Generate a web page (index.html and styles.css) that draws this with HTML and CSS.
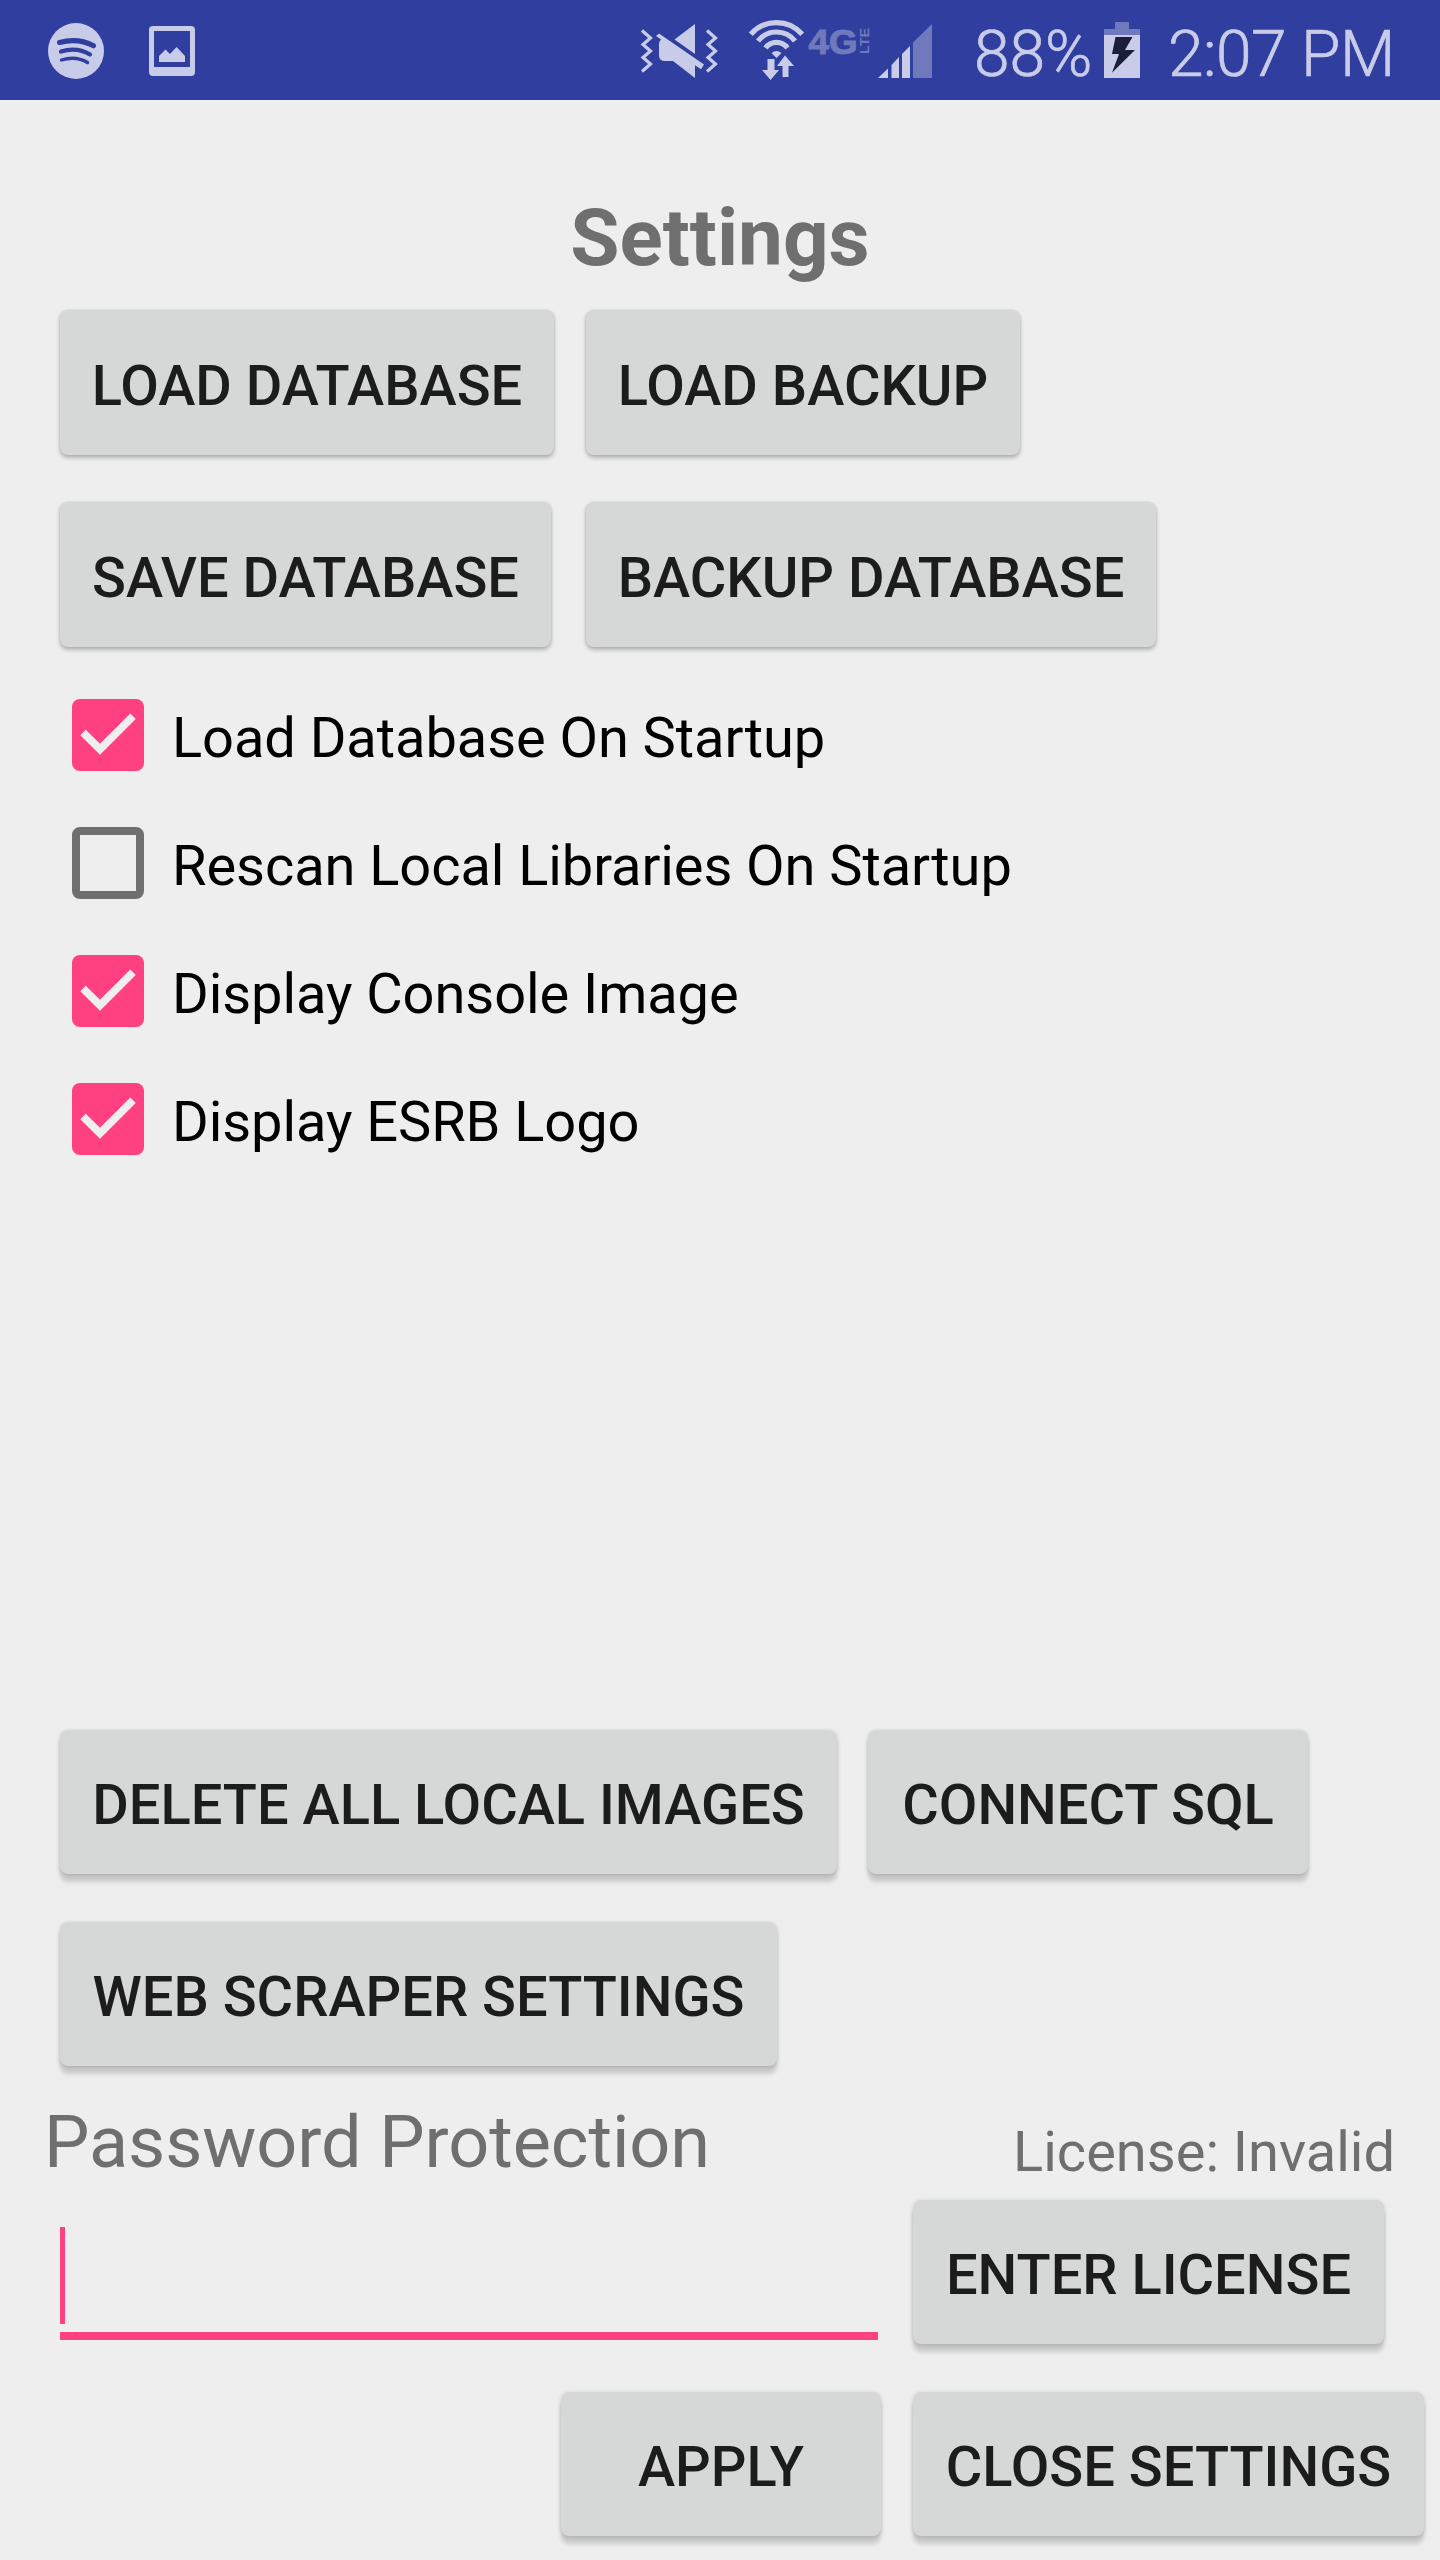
FILE: index.html
```html
<!DOCTYPE html>
<html lang="en">
<head>
<meta charset="utf-8">
<title>Settings</title>
<link rel="stylesheet" href="styles.css">
</head>
<body>
<div class="screen">
  <header class="status">
    <svg class="ico spotify" viewBox="48 23 56 56" width="56" height="56"><circle cx="76" cy="51" r="28" fill="#c9cce8"/><g fill="none" stroke="#303f9f" stroke-linecap="round"><path d="M59.500 42.500Q78 37.500 93.500 45.800" stroke-width="5"/><path d="M61 51.500Q77 46.500 90 54.500" stroke-width="4.200"/><path d="M61.500 60Q76 55.500 87.500 62.500" stroke-width="3.400"/></g></svg>
    <svg class="ico picture" viewBox="149 26 46 50" width="46" height="50"><path fill="#c9cce8" fill-rule="evenodd" d="M153 26h38a4 4 0 0 1 4 4v42a4 4 0 0 1-4 4h-38a4 4 0 0 1-4-4V30a4 4 0 0 1 4-4zM154 31v36h36V31z"/><path fill="#c9cce8" d="M159 62v-6l6.500-6.500 4.500 4.500 6.500-7 8.500 9v6z"/></svg>
    <svg class="ico mute" viewBox="640 22 78 58" width="78" height="58"><g fill="none" stroke="#c9cce8" stroke-width="3.200"><path d="M642 30.500l8.500 7.500-7.500 6.500 7.500 6.500-7.500 6.500 7.500 6.500-8.500 7.500M707 30.500l8.500 7.500-7.500 6.500 7.500 6.500-7.500 6.500 7.500 6.500-8.500 7.500"/></g><path fill="#c9cce8" d="M695 24v30l-20.500-14.500zM659 33.500l45 31-3 4.700-6-4V78l-22-17h-8q-6 0-6-6V44q0-3 2-4.500l-5-3.500z"/></svg>
    <svg class="ico wifi" viewBox="748 20 56 61" width="56" height="61"><g fill="none" stroke="#c9cce8" stroke-width="5.200"><path d="M750.800 34.300a34 34 0 0 1 51.400 0"/><path d="M758 41a23.500 23.500 0 0 1 37 0"/><path d="M765.500 48a13.500 13.500 0 0 1 22 0"/></g><path fill="#c9cce8" d="M771.500 53q5-4 10 0l-5 5zM767.500 59h7v11h4.500l-8.500 10-8.500-10h5.500zM785 55.500l9 10.500h-5.500v11h-6v-11H777z"/></svg>
    <svg class="ico lte" viewBox="808 26 62 30" width="62" height="30"><g fill="#7179bd" stroke="#7179bd"><text class="fourg" x="808.500" y="53.500" textLength="49" lengthAdjust="spacingAndGlyphs">4G</text><text class="small-lte" transform="translate(868.500 54) rotate(-90)" x="0" y="0" textLength="26" lengthAdjust="spacingAndGlyphs">LTE</text></g></svg>
    <svg class="ico signal" viewBox="878 24 54 54" width="54" height="54"><path fill="#7179bd" d="M913 42.500L932 24v54h-19z"/><path fill="#c9cce8" d="M878 78l10-9.500V78zM891.500 65l7.500-8v21h-7.500zM902 54l8-8v32h-8z"/></svg>
    <span class="pct">88%</span>
    <svg class="ico battery" viewBox="1104 22 36 56" width="36" height="56"><path fill="#7179bd" d="M1115 22h14v7h11v6h-36v-6h11z"/><path fill="#c9cce8" d="M1104 35h36v43h-36z"/><path fill="#1b1e38" d="M1115.500 37h17l-7.500 13h10l-23 22.700 7-18.700h-7z"/></svg>
    <span class="time">2:07 PM</span>
  </header>

  <h1 class="title">Settings</h1>

  <div class="grid">
    <button class="btn load-db">LOAD DATABASE</button>
    <button class="btn load-bk">LOAD BACKUP</button>
    <button class="btn save-db">SAVE DATABASE</button>
    <button class="btn bk-db">BACKUP DATABASE</button>
  </div>

  <div class="checks">
    <div class="check"><svg class="box" viewBox="0 0 72 72"><rect width="72" height="72" rx="8" fill="#ff4081"/><path d="M11 33.500L28 50.300 61 17.300" fill="none" stroke="#eee" stroke-width="7.800"/></svg><span>Load Database On Startup</span></div>
    <div class="check"><svg class="box" viewBox="0 0 72 72"><rect x="4" y="4" width="64" height="64" rx="4" fill="none" stroke="#6f6f6f" stroke-width="8"/></svg><span>Rescan Local Libraries On Startup</span></div>
    <div class="check"><svg class="box" viewBox="0 0 72 72"><rect width="72" height="72" rx="8" fill="#ff4081"/><path d="M11 33.500L28 50.300 61 17.300" fill="none" stroke="#eee" stroke-width="7.800"/></svg><span>Display Console Image</span></div>
    <div class="check"><svg class="box" viewBox="0 0 72 72"><rect width="72" height="72" rx="8" fill="#ff4081"/><path d="M11 33.500L28 50.300 61 17.300" fill="none" stroke="#eee" stroke-width="7.800"/></svg><span>Display ESRB Logo</span></div>
  </div>

  <section class="lower">
    <div class="row">
      <button class="btn deep delete">DELETE ALL LOCAL IMAGES</button>
      <button class="btn deep connect">CONNECT SQL</button>
    </div>
    <div class="row">
      <button class="btn deep scraper">WEB SCRAPER SETTINGS</button>
    </div>
  </section>

  <div class="labels"><span class="password">Password Protection</span><span class="license">License: Invalid</span></div>

  <div class="entry">
    <div class="field"><div class="cursor"></div></div>
    <button class="btn deep enter">ENTER LICENSE</button>
  </div>
  <div class="actions">
    <button class="btn deep apply">APPLY</button>
    <button class="btn deep close">CLOSE SETTINGS</button>
  </div>
</div>
</body>
</html>
```
FILE: styles.css
```css
* { box-sizing: border-box; }
body { margin: 0; background: #eee; font-family: Roboto, "Noto Sans", sans-serif; }
.screen { width: 1440px; height: 2560px; overflow: hidden; display: flex; flex-direction: column; background: #eee; }

.status { height: 100px; flex: none; display: flex; align-items: flex-start; background: #303f9f; color: #c9cce8; font-size: 64px; font-weight: 300; line-height: 100px; white-space: nowrap; -webkit-text-stroke: .7px #c9cce8; }
.ico { display: block; flex: none; overflow: visible; }
.spotify { margin: 23px 0 0 48px; }
.picture { margin: 26px 0 0 45px; }
.mute { margin: 22px 0 0 445px; }
.wifi { margin: 20px 0 0 30px; }
.lte { margin: 26px 0 0 4px; -webkit-text-stroke: 0; }
.signal { margin: 24px 0 0 8px; }
.battery { margin: 22px 0 0; }
.fourg { font: bold 35px "Liberation Sans", sans-serif; stroke-width: 1px; }
.small-lte { font: bold 12px "Liberation Sans", sans-serif; stroke-width: 0; }
.pct { width: 130px; margin-left: 42px; padding-top: 5px; }
.time { margin-left: 28px; padding-top: 5px; letter-spacing: -.5px; }

.title { margin: 92px 0 0; height: 92px; line-height: 92px; font-size: 80px; font-weight: 700; text-align: center; color: #6f6f6f; }

.btn { flex: none; height: 144px; margin: 0; padding: 6px 0 0; border: 0; border-radius: 8px; background: #d6d8d7; color: #1c1c1c; font-family: inherit; font-size: 56px; font-weight: 500; line-height: 66px; text-align: center; white-space: nowrap; box-shadow: 0 3px 4px rgba(0, 0, 0, .24), 0 0 3px rgba(0, 0, 0, .12); }
.grid .btn { height: 145px; }
.btn.deep { box-shadow: 0 8px 4px rgba(0, 0, 0, .15), 0 1px 4px rgba(0, 0, 0, .16); }

.grid { display: grid; grid-template-columns: 526px auto; justify-content: start; justify-items: start; row-gap: 47px; margin: 26px 0 0 60px; }
.load-db { width: 494px; }
.load-bk { width: 434px; }
.save-db { width: 491px; }
.bk-db { width: 570px; }

.checks { margin: 24px 0 0 72px; }
.check { display: flex; align-items: center; gap: 28px; height: 128px; font-size: 56px; letter-spacing: -.07px; color: #000; }
.check span { padding-top: 6px; line-height: 66px; }
.box { width: 72px; height: 72px; }

.lower { display: flex; flex-direction: column; gap: 48px; margin: 547px 0 0 60px; }
.row { display: flex; gap: 31px; }
.delete { width: 777px; }
.connect { width: 440px; }
.scraper { width: 717px; }

.labels { display: flex; justify-content: space-between; height: 134px; padding: 35px 45px 0 44px; color: #6f6f6f; }
.password { font-size: 72px; line-height: 84px; letter-spacing: -.07px; }
.license { font-size: 56px; line-height: 66px; padding-top: 18px; }

.entry { display: flex; margin-left: 60px; gap: 35px; }
.field { width: 818px; height: 140px; padding-top: 27px; border-bottom: 8px solid #ff4081; }
.cursor { width: 5px; height: 97px; background: #ff4081; }
.enter { width: 471px; }

.actions { display: flex; gap: 32px; margin: 48px 0 0 561px; }
.apply { width: 320px; }
.close { width: 511px; }
```
